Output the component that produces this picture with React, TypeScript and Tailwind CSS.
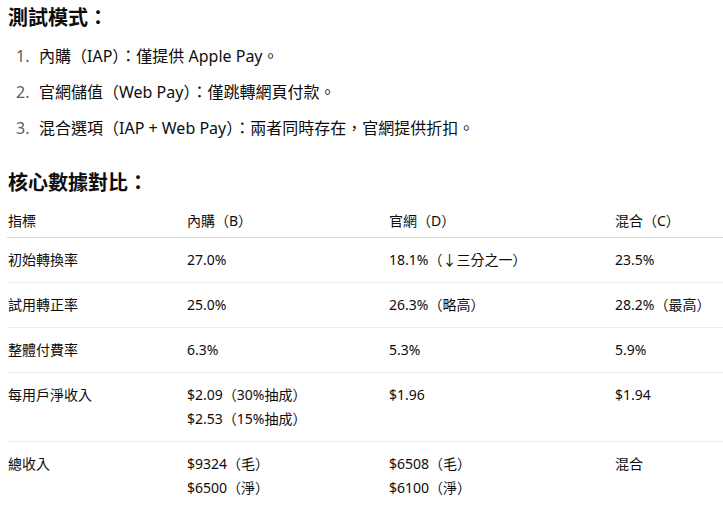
const FONT = "font-['Noto_Sans','Noto_Sans_CJK_TC',sans-serif]";

interface Row {
  label: string;
  b: string[];
  d: string[];
  c: string[];
}

const modes = [
  '內購（IAP）：僅提供 Apple Pay。',
  '官網儲值（Web Pay）：僅跳轉網頁付款。',
  '混合選項（IAP + Web Pay）：兩者同時存在，官網提供折扣。',
];

const rows: Row[] = [
  { label: '初始轉換率', b: ['27.0%'], d: ['18.1%（↓三分之一）'], c: ['23.5%'] },
  { label: '試用轉正率', b: ['25.0%'], d: ['26.3%（略高）'], c: ['28.2%（最高）'] },
  { label: '整體付費率', b: ['6.3%'], d: ['5.3%'], c: ['5.9%'] },
  {
    label: '每用戶淨收入',
    b: ['$2.09（30%抽成）', '$2.53（15%抽成）'],
    d: ['$1.96'],
    c: ['$1.94'],
  },
  {
    label: '總收入',
    b: ['$9324（毛）', '$6500（淨）'],
    d: ['$6508（毛）', '$6100（淨）'],
    c: ['混合'],
  },
];

function Lines({ lines }: { lines: string[] }) {
  return (
    <>
      {lines.map((l, i) => (
        <div key={i}>{l}</div>
      ))}
    </>
  );
}

export default function App() {
  return (
    <div className={`${FONT} w-[723px] h-[520px] overflow-hidden bg-white text-[#0d0d0d]`}>
      <div className="flex flex-col pl-2 pt-1">
        <h3 className="text-[20px] font-bold leading-7">測試模式：</h3>

        <ol className="mt-[10px] flex flex-col gap-2 text-[16px] leading-7">
          {modes.map((m, i) => (
            <li key={m} className="flex">
              <span className="w-[31px] pl-[8px] text-[#5d5d5d]">{i + 1}.</span>
              <span>{m}</span>
            </li>
          ))}
        </ol>

        <h3 className="mt-[27px] text-[20px] font-bold leading-7">核心數據對比：</h3>
      </div>

      <table className="ml-[7px] mt-1 w-[716px] table-fixed border-collapse text-[14px] leading-6">
        <colgroup>
          <col className="w-[179px]" />
          <col className="w-[202px]" />
          <col className="w-[226px]" />
          <col />
        </colgroup>
        <thead>
          <tr className="border-b border-[#d9d9d9]">
            <th className="pl-px pt-2 pb-1 text-left font-normal">指標</th>
            <th className="pl-px pt-2 pb-1 text-left font-normal">內購（B）</th>
            <th className="pl-px pt-2 pb-1 text-left font-normal">官網（D）</th>
            <th className="pl-px pt-2 pb-1 text-left font-normal">混合（C）</th>
          </tr>
        </thead>
        <tbody>
          {rows.map((r, i) => (
            <tr
              key={r.label}
              className={i < rows.length - 1 ? 'border-b border-[#ececec] align-top' : 'align-top'}
            >
              <td className="pl-px py-[10px]">{r.label}</td>
              <td className="pl-px py-[10px]">
                <Lines lines={r.b} />
              </td>
              <td className="pl-px py-[10px]">
                <Lines lines={r.d} />
              </td>
              <td className="pl-px py-[10px]">
                <Lines lines={r.c} />
              </td>
            </tr>
          ))}
        </tbody>
      </table>
    </div>
  );
}
